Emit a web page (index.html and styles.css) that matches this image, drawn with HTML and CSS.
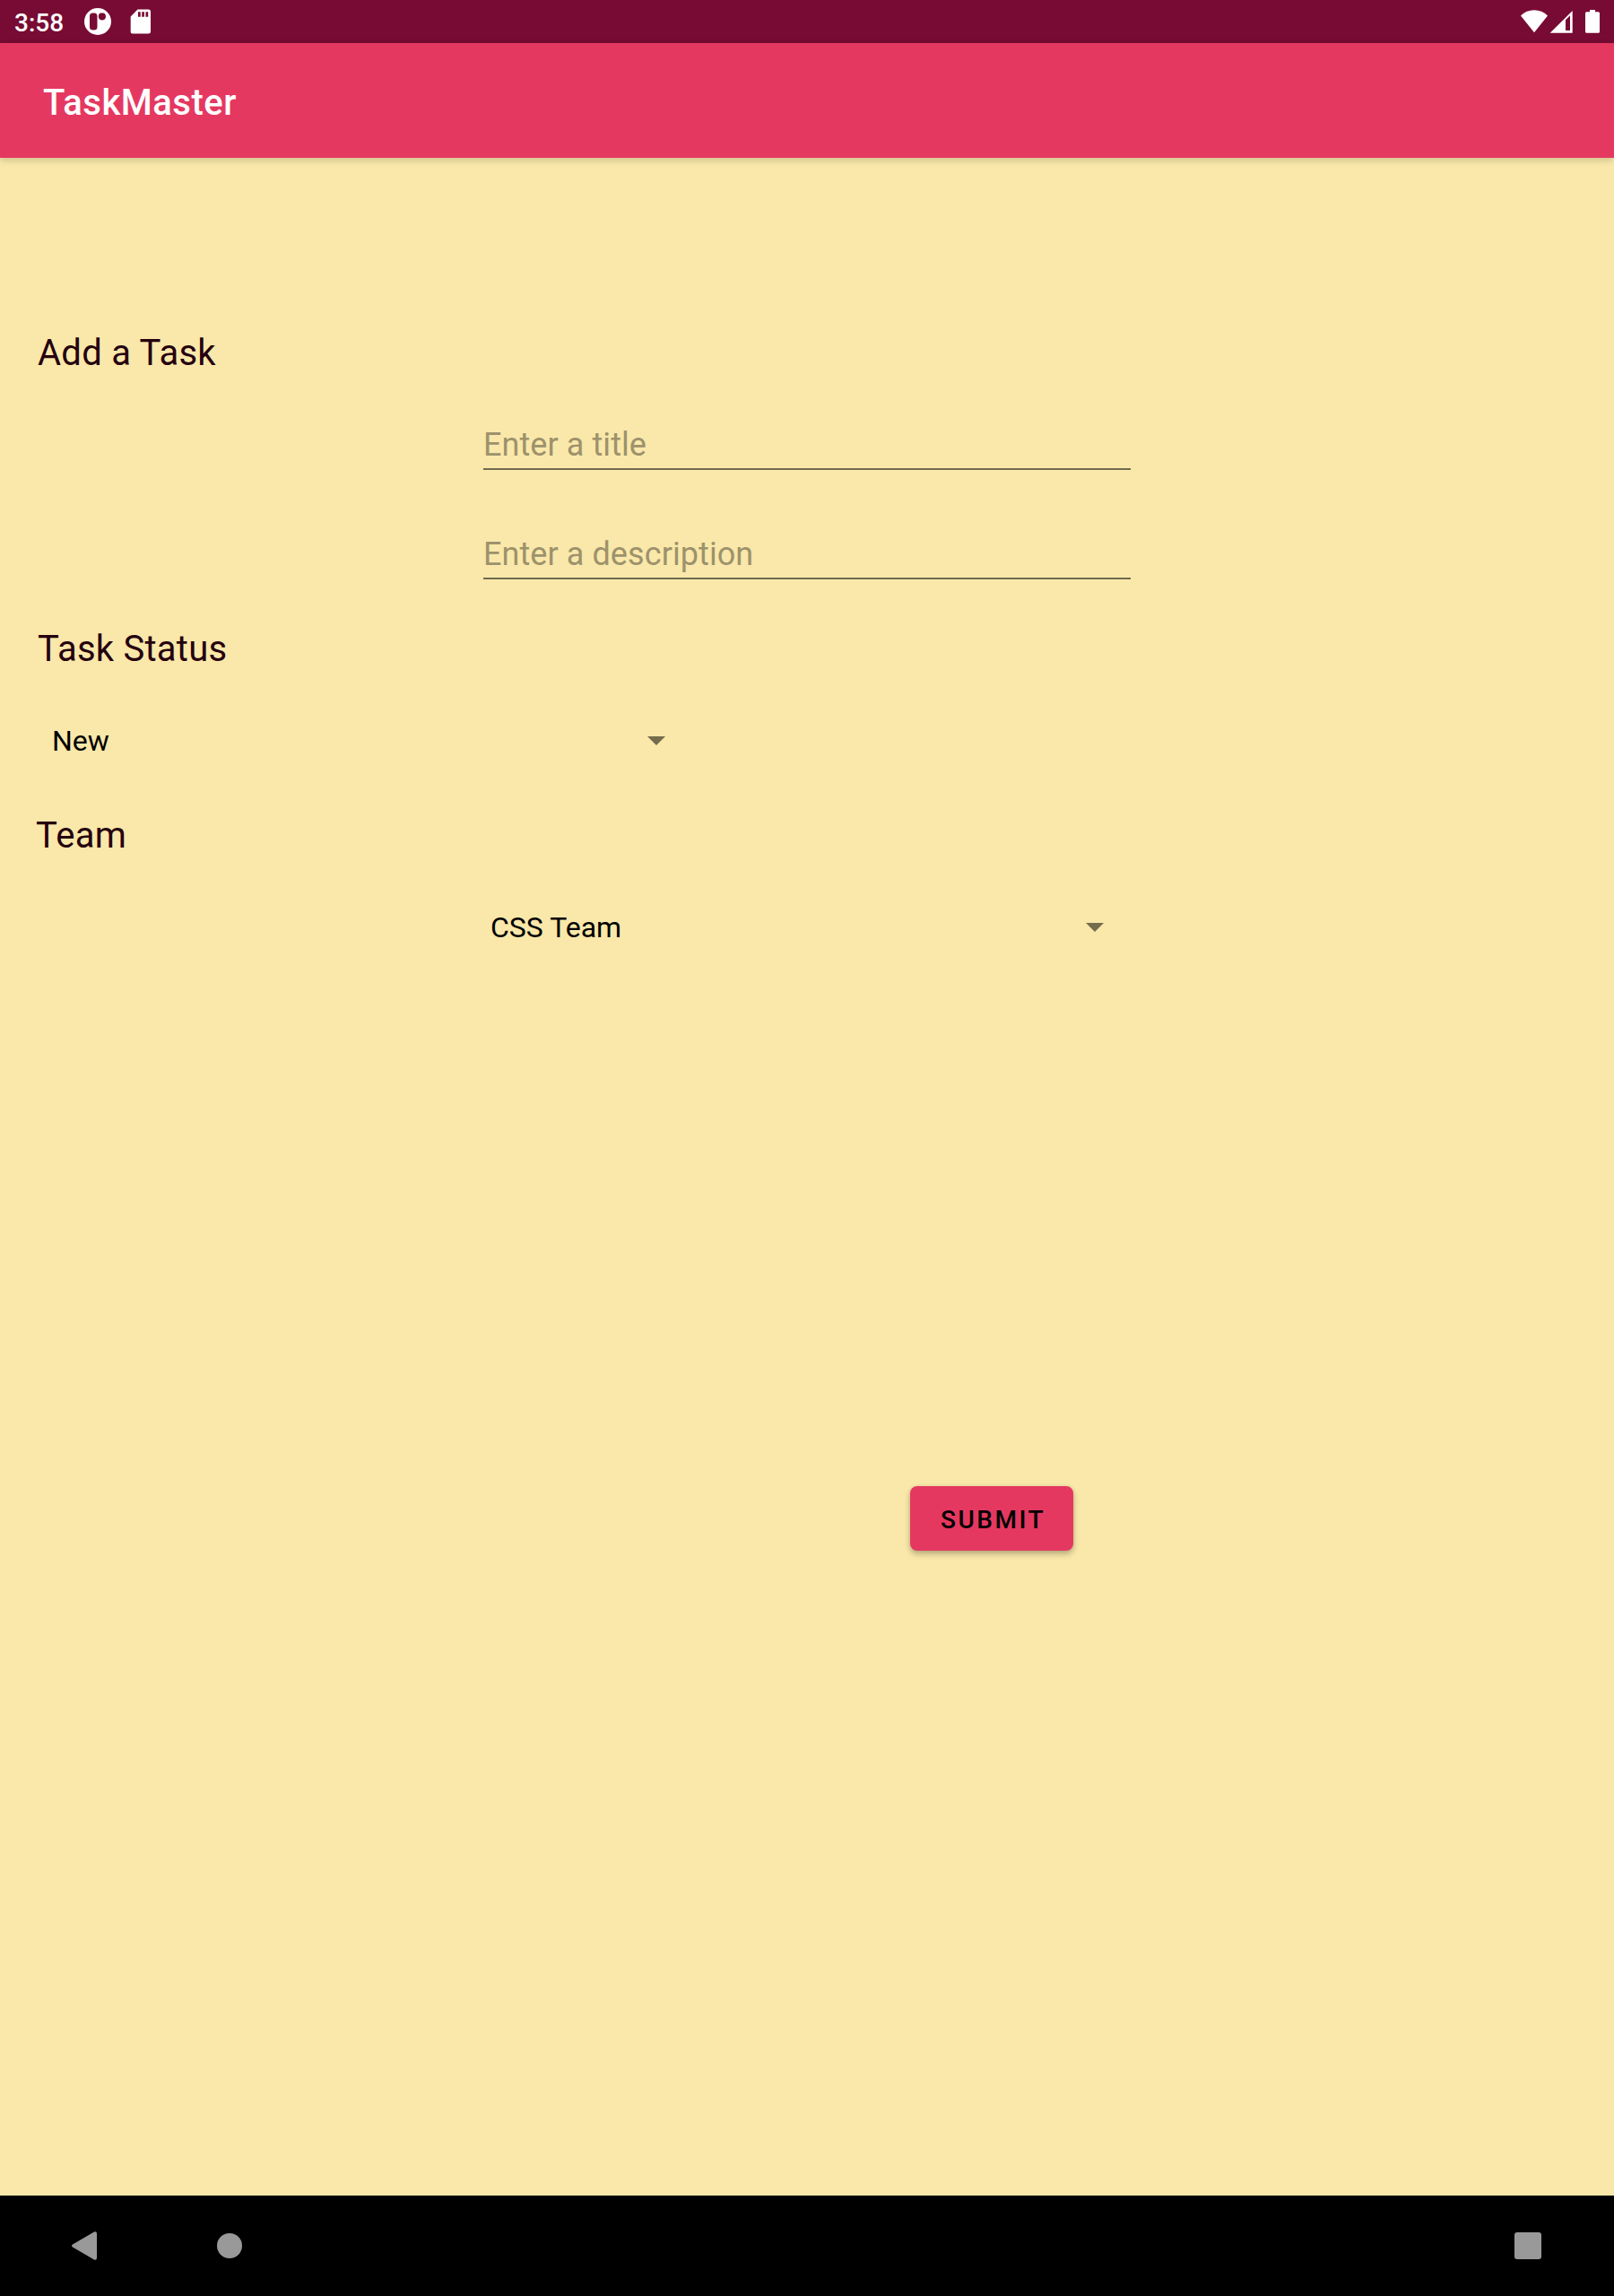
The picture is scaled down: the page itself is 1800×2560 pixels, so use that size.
FILE: index.html
```html
<!DOCTYPE html>
<html lang="en">
<head>
<meta charset="utf-8">
<title>TaskMaster</title>
<link rel="stylesheet" href="styles.css">
</head>
<body>
<div class="status-bar">
  <span class="clock">3:58</span>
  <svg class="notice" width="32" height="32" viewBox="0 0 32 32"><path fill="#fff" fill-rule="evenodd" d="M16 1a15 15 0 1 0 0 30a15 15 0 1 0 0-30zM10.500 6.500h1.500a3.500 3.500 0 0 1 3.500 3.500v12a3.500 3.500 0 0 1-3.500 3.500h-1.500a3.500 3.500 0 0 1-3.500-3.500v-12a3.500 3.500 0 0 1 3.500-3.500zM19.500 6.500h2.500c1.500 0 3 1.500 3 4c0 2.500-1.800 4-4 4s-4.200-1.500-4.200-4c0-2.500 1.200-4 2.700-4z"/></svg>
  <svg class="card-icon" width="24" height="28" viewBox="0 0 24 28"><path fill="#fff" fill-rule="evenodd" d="M8.500 .5h12a2.500 2.500 0 0 1 2.500 2.500v22a2.500 2.500 0 0 1-2.500 2.500h-17.500a2.300 2.300 0 0 1-2.300-2.500v-16.500zM9 3.200v5.600h2.700v-5.600zM13.200 3.200v5.600h2.700v-5.600zM17.500 3.200v5.600h2.700v-5.600z"/></svg>
  <span class="spacer"></span>
  <svg width="100" height="48" viewBox="1700 0 100 48" fill="#fff"><path d="M1711 36.300L1696 17.500C1704 9.200 1718 9.200 1726 17.500z"/><path fill-rule="evenodd" d="M1753.700 12v24.700h-25zM1746 22.200v11.800h5v-16.800z"/><path d="M1773 11h6v2.300h3.500a1.500 1.500 0 0 1 1.500 1.500v20.500a1.500 1.500 0 0 1-1.500 1.500h-13a1.500 1.500 0 0 1-1.500-1.500v-20.500a1.500 1.500 0 0 1 1.500-1.500h3.500z"/></svg>
</div>
<header class="app-bar">TaskMaster</header>
<main class="form">
  <h1 class="label">Add a Task</h1>
  <input class="field title-field" placeholder="Enter a title">
  <input class="field description-field" placeholder="Enter a description">
  <h2 class="label status-label">Task Status</h2>
  <div class="spinner status-spinner"><span>New</span><svg class="arrow" width="20" height="10" viewBox="0 0 20 10"><path d="M0 0h20L10 10z"/></svg></div>
  <h2 class="label team-label">Team</h2>
  <div class="spinner team-spinner"><span>CSS Team</span><svg class="arrow" width="20" height="10" viewBox="0 0 20 10"><path d="M0 0h20L10 10z"/></svg></div>
  <button class="submit">SUBMIT</button>
</main>
<nav class="nav-bar">
  <svg width="28" height="32" viewBox="0 0 28 32"><path d="M1 14.500L25 .4Q28-.6 28 2.500v27Q28 32.600 25 31.600L1 17.500Q-1 16 1 14.500z"/></svg>
  <span class="home"></span>
  <span class="recents"></span>
</nav>
</body>
</html>
```
FILE: styles.css
```css
* { box-sizing: border-box; }
body {
  margin: 0;
  width: 1800px;
  height: 2560px;
  display: flex;
  flex-direction: column;
  overflow: hidden;
  background: #f9e8a9;
  font-family: Roboto, sans-serif;
}
svg { display: block; flex: none; overflow: visible; }
.status-bar {
  height: 48px;
  display: flex;
  align-items: center;
  padding-left: 16px;
  background: #780b33;
  color: #fff;
}
.clock { width: 77px; padding-top: 3px; font-size: 28px; line-height: 48px; font-weight: 500; }
.card-icon { margin-left: 20px; }
.spacer { flex: 1; }
.app-bar {
  height: 128px;
  padding: 3px 48px 0;
  background: #e53861;
  color: #fff;
  font-size: 40px;
  font-weight: 500;
  line-height: 128px;
  letter-spacing: .5px;
  box-shadow: 0 2px 8px rgba(0, 0, 0, .2);
}
.form {
  flex: 1;
  display: flex;
  flex-direction: column;
  align-items: flex-start;
  padding-top: 193px;
}
.label {
  margin: 0 0 0 42px;
  padding-top: 1px;
  height: 48px;
  font-size: 40px;
  font-weight: 400;
  line-height: 48px;
  letter-spacing: .25px;
  color: #25000f;
}
.field {
  align-self: center;
  width: 722px;
  height: 50px;
  padding: 0 0 4px;
  border: 0;
  border-bottom: 2px solid #706a4f;
  background: none;
  font: 36px/44px Roboto, sans-serif;
  letter-spacing: .08px;
}
.field::placeholder { color: #9d926c; opacity: 1; }
.title-field { margin-top: 57px; }
.description-field { margin-top: 72px; }
.status-label { margin-top: 53px; }
.spinner {
  width: 684px;
  height: 48px;
  display: flex;
  align-items: center;
  justify-content: space-between;
  font-size: 32px;
  line-height: 48px;
  color: #000;
}
.status-spinner { margin: 55px 0 0 58px; }
.arrow { fill: #756c4d; }
.team-label { margin: 57px 0 0 40px; }
.team-spinner { margin: 55px 0 0 547px; }
.submit {
  width: 182px;
  height: 72px;
  margin: 599px 0 0 1015px;
  padding: 3px 0 0 3px;
  border: 0;
  border-radius: 8px;
  background: #e53861;
  color: #000;
  font: 500 28px/69px Roboto, sans-serif;
  letter-spacing: 2.5px;
  box-shadow: 0 4px 6px rgba(0, 0, 0, .24), 0 0 4px rgba(0, 0, 0, .1);
}
.nav-bar {
  height: 112px;
  display: flex;
  align-items: center;
  padding: 0 81px 0 80px;
  background: #000;
  fill: #999;
}
.home { width: 28px; height: 28px; margin-left: 134px; border-radius: 50%; background: #999; }
.recents { width: 30px; height: 30px; margin-left: auto; border-radius: 3px; background: #999; }
```
